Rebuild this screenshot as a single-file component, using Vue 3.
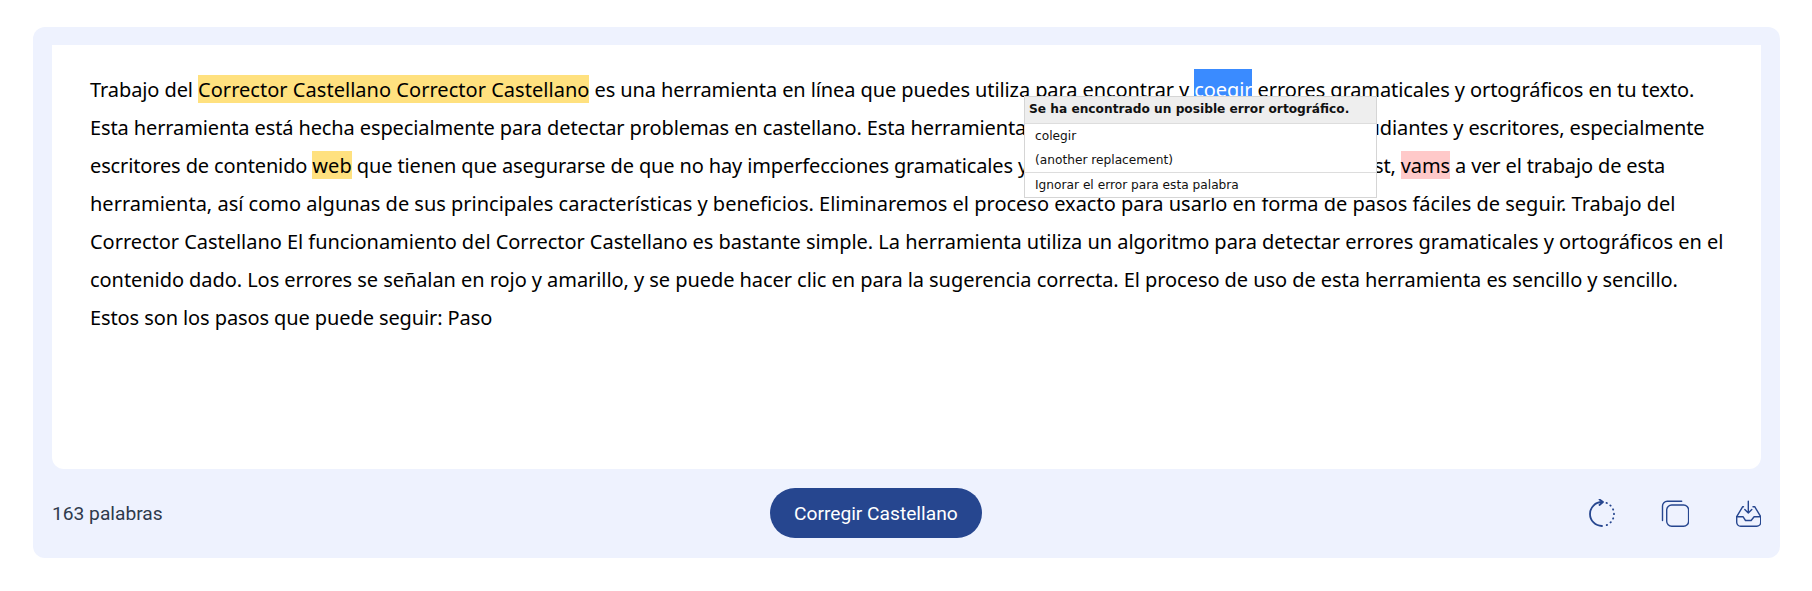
<script setup>
const lines = [
  {
    ls: 0.01,
    parts: [
      { t: "Trabajo del " },
      { t: "Corrector Castellano Corrector Castellano", c: "warn" },
      { t: " es una herramienta en línea que puedes utiliza para encontrar y " },
      { t: "coegir", c: "picked" },
      { t: " errores gramaticales y ortográficos en tu texto." },
    ],
  },
  { ls: -0.014, parts: [{ t: "Esta herramienta está hecha especialmente para detectar problemas en castellano. Esta herramienta es especialmente buena para los estudiantes y escritores, especialmente" }] },
  {
    ls: -0.035,
    parts: [
      { t: "escritores de contenido " },
      { t: "web", c: "warn" },
      { t: " que tienen que asegurarse de que no hay imperfecciones gramaticales y ortográficas en su escrito. En este post, " },
      { t: "vams", c: "err" },
      { t: " a ver el trabajo de esta" },
    ],
  },
  { ls: 0.095, parts: [{ t: "herramienta, así como algunas de sus principales características y beneficios. Eliminaremos el proceso exacto para usarlo en forma de pasos fáciles de seguir. Trabajo del" }] },
  { ls: 0.066, parts: [{ t: "Corrector Castellano El funcionamiento del Corrector Castellano es bastante simple. La herramienta utiliza un algoritmo para detectar errores gramaticales y ortográficos en el" }] },
  { ls: 0.04, parts: [{ t: "contenido dado. Los errores se señalan en rojo y amarillo, y se puede hacer clic en para la sugerencia correcta. El proceso de uso de esta herramienta es sencillo y sencillo." }] },
  { ls: 0, parts: [{ t: "Estos son los pasos que puede seguir: Paso" }] },
];

// base tracking of the body text, each line nudged a little to land on the reference width
const tracking = (line) => `${(line.ls - 0.1).toFixed(3)}px`;
</script>

<template>
  <div class="page">
    <section class="panel">
      <div class="editor">
        <p v-for="(line, i) in lines" :key="i" class="line" :style="{ letterSpacing: tracking(line) }">
          <span v-for="(part, j) in line.parts" :key="j" :class="part.c">{{ part.t }}</span>
        </p>
        <div class="popup">
          <div class="popup-head">Se ha encontrado un posible error ortográfico.</div>
          <div class="popup-opts">
            <div>colegir</div>
            <div>(another replacement)</div>
          </div>
          <div class="popup-foot">Ignorar el error para esta palabra</div>
        </div>
      </div>
      <div class="toolbar">
        <span class="count">163 palabras</span>
        <button class="submit">Corregir Castellano</button>
        <div class="actions">
          <svg width="26" height="28" viewBox="0 0 26 28" fill="none" stroke="#26468f" stroke-width="1.8" stroke-linecap="round" stroke-linejoin="round">
            <path d="M13 27A12 12 0 0 1 13 3" />
            <path d="M10.500 0.500L14 3l-3.500 3" />
            <path d="M17.500 3.900A12 12 0 0 1 16.500 26.500" stroke-dasharray="0.4 4.200" />
          </svg>
          <svg width="28" height="28" viewBox="0 0 28 28" fill="none" stroke="#26468f" stroke-width="1.4" stroke-linecap="round">
            <rect x="5.700" y="6" width="21.900" height="21.300" rx="5" />
            <path d="M1.500 21.500V7a4.700 4.700 0 0 1 4.700-4.700h14.500" />
          </svg>
          <svg width="26" height="28" viewBox="0 0 26 28" fill="none" stroke="#26468f" stroke-width="1.4" stroke-linecap="round" stroke-linejoin="round">
            <path d="M13.300 2.300V14M9.800 10.500l3.500 3.500 3.500-3.500" />
            <path d="M8.500 7.700H7.700L1.700 17.700v5.600a4 4 0 0 0 4 4h16a4 4 0 0 0 4-4v-5.600L19.700 7.700H18" />
            <path d="M1.700 17.700H8l2.500 3.800h5.600l3-3.800h6.600" />
          </svg>
        </div>
      </div>
    </section>
  </div>
</template>

<style>
body {
  background: #fff;
}
</style>

<style scoped>
.page {
  height: 591px;
  padding: 27px 32px 33px 33px;
  box-sizing: border-box;
}

.panel {
  height: 531px;
  background: #eef2fe;
  border-radius: 12px;
  padding: 18px 19px 0;
  box-sizing: border-box;
  display: flex;
  flex-direction: column;
}

.editor {
  position: relative;
  height: 424px;
  background: #fff;
  border-radius: 0 0 12px 12px;
  padding: 26px 38px;
  box-sizing: border-box;
  font-family: "Noto Sans", sans-serif;
  font-size: 20px;
  color: #000;
}

.line {
  margin: 0;
  height: 38px;
  line-height: 38px;
  white-space: nowrap;
}

.warn {
  background: #ffe17f;
  letter-spacing: 0.03px;
  padding-top: 1px;
}

.err {
  background: #ffc9c9;
  padding-top: 1px;
}

.picked {
  background: #3a8bff;
  color: #fff;
  padding: 7px 0 0;
}

.popup {
  position: absolute;
  left: 972px;
  top: 51px;
  width: 353px;
  box-sizing: border-box;
  background: #fff;
  border: 1px solid #d5d5d5;
  font-family: "DejaVu Sans", sans-serif;
  font-size: 12.2px;
  letter-spacing: 0;
  color: #111;
}

.popup-head {
  background: #eee;
  border-bottom: 1px solid #ddd;
  font-weight: 700;
  height: 26px;
  line-height: 24px;
  padding-left: 4px;
}

.popup-opts {
  padding: 0 10px;
  line-height: 24px;
}

.popup-foot {
  border-top: 1px solid #ddd;
  padding-left: 10px;
  height: 24px;
  line-height: 24px;
}

.toolbar {
  flex: 1;
  display: flex;
  justify-content: space-between;
  align-items: center;
  padding-bottom: 1px;
  font-family: Roboto, sans-serif;
}

.count {
  font-size: 19.2px;
  color: #2f3a4c;
}

.submit {
  width: 212px;
  height: 50px;
  border: 0;
  border-radius: 25px;
  background: #26468f;
  color: #fff;
  font-family: Roboto, sans-serif;
  font-size: 19.2px;
}

.actions {
  display: flex;
  gap: 46px;
  width: 172px;
}
</style>
